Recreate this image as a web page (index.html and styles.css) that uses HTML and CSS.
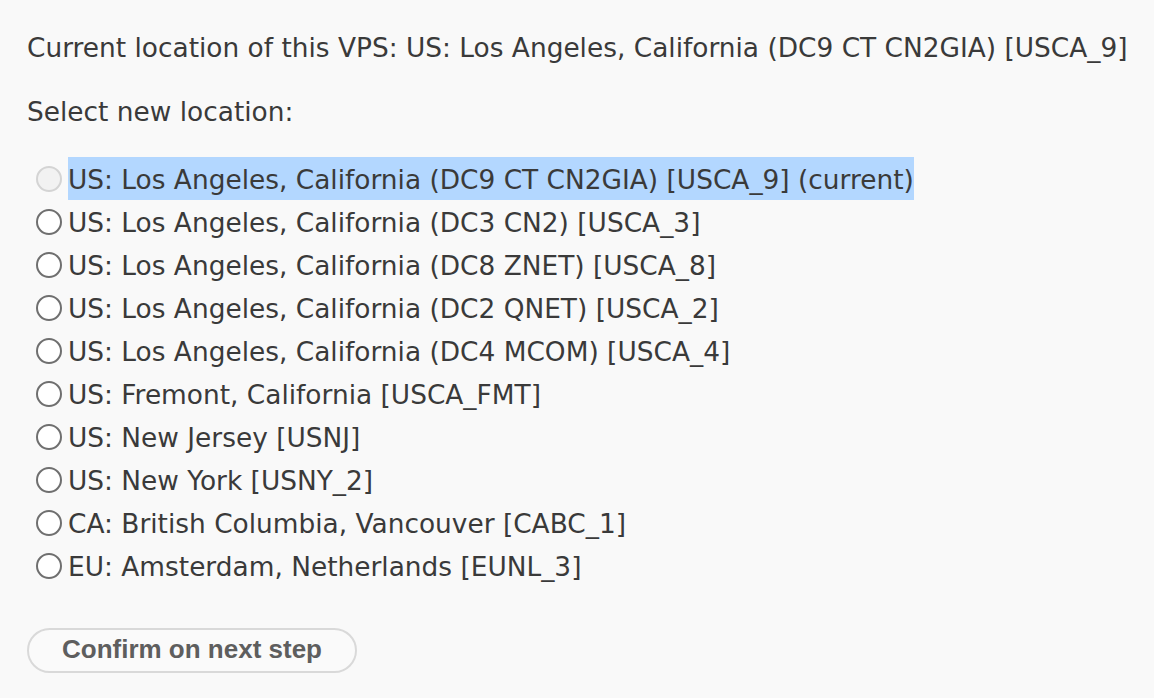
FILE: index.html
```html
<!DOCTYPE html>
<html lang="en">
<head>
  <meta charset="UTF-8" />
  <title>Change VPS location</title>
  <link rel="stylesheet" href="styles.css">
</head>
<body>

  <form class="relocate">
    <p class="current">Current location of this VPS: US: Los Angeles, California (DC9 CT CN2GIA) [USCA_9]</p>
    <p class="select-label">Select new location:</p>

    <div class="locations">
      <label class="loc disabled"><input type="radio" name="loc" value="USCA_9" disabled><span class="picked">US: Los Angeles, California (DC9 CT CN2GIA) [USCA_9] (current)</span></label>
      <label class="loc"><input type="radio" name="loc" value="USCA_3"><span>US: Los Angeles, California (DC3 CN2) [USCA_3]</span></label>
      <label class="loc"><input type="radio" name="loc" value="USCA_8"><span>US: Los Angeles, California (DC8 ZNET) [USCA_8]</span></label>
      <label class="loc"><input type="radio" name="loc" value="USCA_2"><span>US: Los Angeles, California (DC2 QNET) [USCA_2]</span></label>
      <label class="loc"><input type="radio" name="loc" value="USCA_4"><span>US: Los Angeles, California (DC4 MCOM) [USCA_4]</span></label>
      <label class="loc"><input type="radio" name="loc" value="USCA_FMT"><span>US: Fremont, California [USCA_FMT]</span></label>
      <label class="loc"><input type="radio" name="loc" value="USNJ"><span>US: New Jersey [USNJ]</span></label>
      <label class="loc"><input type="radio" name="loc" value="USNY_2"><span>US: New York [USNY_2]</span></label>
      <label class="loc"><input type="radio" name="loc" value="CABC_1"><span>CA: British Columbia, Vancouver [CABC_1]</span></label>
      <label class="loc"><input type="radio" name="loc" value="EUNL_3"><span>EU: Amsterdam, Netherlands [EUNL_3]</span></label>
    </div>

    <button type="button" class="confirm">Confirm on next step</button>
  </form>

</body>
</html>
```

FILE: styles.css
```css
body {
  margin: 0;
  background: #f9f9f9;
  color: #3a3a3a;
  font-family: "DejaVu Sans", Verdana, sans-serif;
  font-size: 26.4px;
}

.relocate {
  padding: 25px 27px 0;
}

.current,
.select-label {
  margin: 0;
  height: 43px;
  line-height: 45px;
  white-space: nowrap;
}

.select-label {
  margin-top: 21px;
}

/* Список локацій */
.locations {
  margin-top: 25px;
  padding-left: 9px;
}

.loc {
  display: flex;
  align-items: center;
  height: 43px;
}

.loc input {
  appearance: none;
  -webkit-appearance: none;
  width: 26px;
  height: 26px;
  margin: 0 6px 0 0;
  border: 2px solid #6f6f6f;
  border-radius: 50%;
  background: #fff;
  flex: none;
}

.loc span {
  display: block;
  height: 43px;
  line-height: 45px;
  white-space: nowrap;
}

.loc.disabled input {
  border-color: #d4d4d4;
  background: #f2f2f2;
}

.picked {
  background: #b3d7ff;
}

/* Кнопка */
.confirm {
  margin-top: 41px;
  width: 330px;
  height: 45px;
  border: 2px solid #d9d9d9;
  border-radius: 23px;
  background: #fafafa;
  color: #5e5e5e;
  font-family: "Liberation Sans", Arial, sans-serif;
  font-weight: bold;
  font-size: 26px;
  padding: 0 0 2px;
}
```
